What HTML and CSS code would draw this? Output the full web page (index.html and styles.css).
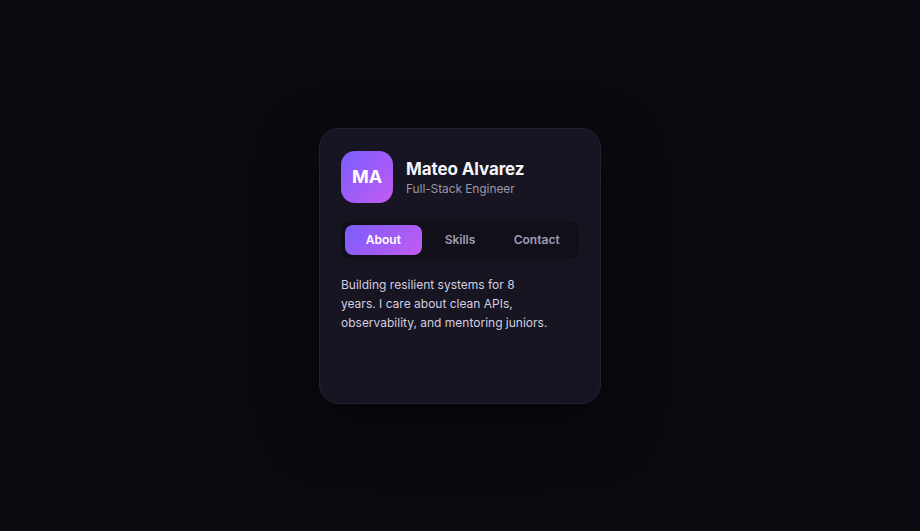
FILE: index.html
```html
<!DOCTYPE html>
<html lang="en">
<head>
<meta charset="utf-8">
<title>Profile card</title>
<link rel="stylesheet" href="styles.css">
</head>
<body>
<main class="stage">
  <section class="card">
    <header class="profile">
      <div class="avatar">MA</div>
      <div class="identity">
        <h1 class="name">Mateo Alvarez</h1>
        <p class="role">Full-Stack Engineer</p>
      </div>
    </header>
    <nav class="tabs">
      <button class="tab active">About</button>
      <button class="tab">Skills</button>
      <button class="tab">Contact</button>
    </nav>
    <p class="bio">Building resilient systems for 8 years. I care about clean APIs, observability, and mentoring juniors.</p>
  </section>
</main>
</body>
</html>
```
FILE: styles.css
```css
* { box-sizing: border-box; }
html, body {
  margin: 0;
  height: 100%;
}
body {
  background: #0b0a10;
  font-family: Inter, "Noto Sans", "Liberation Sans", sans-serif;
  color: #f4f2fa;
}
.stage {
  height: 100%;
  display: flex;
  align-items: center;
  justify-content: center;
}
.card {
  width: 282px;
  height: 276px;
  padding: 22px 21px;
  background: #171521;
  border: 1px solid #24213a;
  border-radius: 20px;
  box-shadow: 0 20px 60px rgba(0, 0, 0, 0.55);
  display: flex;
  flex-direction: column;
}
.profile {
  display: flex;
  align-items: center;
  gap: 13px;
}
.avatar {
  width: 52px;
  height: 52px;
  flex: none;
  border-radius: 14px;
  background: linear-gradient(135deg, #7a5cff 0%, #c25cf2 100%);
  display: flex;
  align-items: center;
  justify-content: center;
  font-size: 18px;
  font-weight: 700;
  color: #ffffff;
}
.identity {
  display: flex;
  flex-direction: column;
  margin-top: 3px;
}
.name {
  margin: 0;
  font-size: 17px;
  line-height: 21px;
  font-weight: 700;
  letter-spacing: -0.1px;
  color: #f6f4fb;
}
.role {
  margin: 1px 0 0;
  font-size: 12px;
  line-height: 16px;
  letter-spacing: -0.1px;
  color: #9a96ad;
}
.tabs {
  margin-top: 18px;
  display: flex;
  padding: 4px;
  background: #110f18;
  border-radius: 10px;
}
.tab {
  flex: 1;
  height: 30px;
  border: 0;
  border-radius: 8px;
  background: transparent;
  font-family: inherit;
  font-size: 12px;
  font-weight: 600;
  color: #a09cb4;
  padding: 0;
}
.tab.active {
  background: linear-gradient(135deg, #7a5cff 0%, #c25cf2 100%);
  color: #ffffff;
}
.bio {
  margin: 16px 0 0;
  max-width: 208px;
  font-size: 12px;
  line-height: 19px;
  color: #d2cee0;
}
```
